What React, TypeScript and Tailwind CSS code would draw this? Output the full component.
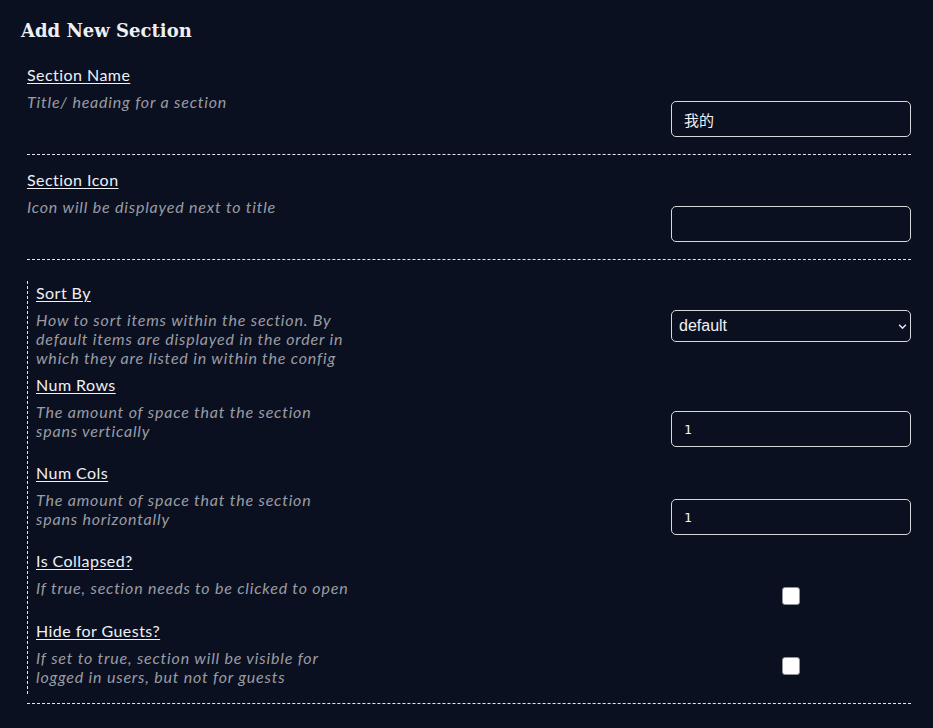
import { useState } from "react";

interface FieldProps {
  label: string;
  description: string;
  children: React.ReactNode;
}

// Label on top, description left, control in a fixed column on the right
function Field({ label, description, children }: FieldProps) {
  return (
    <div>
      <label className="block text-base leading-6 tracking-[0.45px] text-[#eef0f4] underline underline-offset-2">
        {label}
      </label>
      <div className="mt-[5px] flex items-start justify-between">
        <p className="w-[316px] text-base italic leading-[19px] tracking-[0.8px] text-[#9a9ca3]">
          {description}
        </p>
        <div className="flex w-[240px] justify-center">{children}</div>
      </div>
    </div>
  );
}

const inputClass =
  "mt-[9px] h-[36px] w-[240px] rounded-[5px] border border-[#d6d8dc] bg-[#0b1020] px-3 text-[#f1f2f4] outline-none";

function Checkbox({ checked, onChange }: { checked: boolean; onChange: () => void }) {
  return (
    <button
      type="button"
      onClick={onChange}
      className="mt-[9px] mb-[8px] flex h-[18px] w-[18px] items-center justify-center rounded-[3px] border border-[#8f9196] bg-white"
    >
      {checked && (
        <svg viewBox="0 0 12 12" className="h-3 w-3">
          <path d="M2 6.5l2.5 2.5L10 3.5" fill="none" stroke="#0b1020" strokeWidth="2" />
        </svg>
      )}
    </button>
  );
}

export default function App() {
  const [name, setName] = useState("我的");
  const [icon, setIcon] = useState("");
  const [sortBy, setSortBy] = useState("default");
  const [rows, setRows] = useState("1");
  const [cols, setCols] = useState("1");
  const [collapsed, setCollapsed] = useState(false);
  const [hideGuests, setHideGuests] = useState(false);

  return (
    <div
      className="min-h-screen bg-[#0b1020] px-[21px] pt-[20px] pb-10"
      style={{ fontFamily: "Lato, 'Noto Sans CJK SC', sans-serif" }}
    >
      <h2 className="text-[18px] font-bold leading-[22px] text-[#eef0f4] font-['DejaVu_Serif',serif]">
        Add New Section
      </h2>

      <div className="ml-[6px] mt-[21px] w-[884px]">
        {/* Top-level fields */}
        <div className="border-b border-dashed border-[#e3e5e8] pb-[17px]">
          <Field label="Section Name" description="Title/ heading for a section">
            <input
              value={name}
              onChange={(e) => setName(e.target.value)}
              className={`${inputClass} text-[15px] font-['Noto_Sans_CJK_SC',sans-serif]`}
            />
          </Field>
        </div>

        <div className="border-b border-dashed border-[#e3e5e8] pt-[13px] pb-[17px]">
          <Field label="Section Icon" description="Icon will be displayed next to title">
            <input value={icon} onChange={(e) => setIcon(e.target.value)} className={inputClass} />
          </Field>
        </div>

        {/* Display options group */}
        <div className="mt-[21px] flex flex-col gap-[6px] border-l border-dashed border-[#e3e5e8] pl-[8px] pb-[8px]">
          <Field
            label="Sort By"
            description="How to sort items within the section. By default items are displayed in the order in which they are listed in within the config"
          >
            <div className="relative w-[240px]">
              <select
                value={sortBy}
                onChange={(e) => setSortBy(e.target.value)}
                className="h-[32px] w-[240px] appearance-none rounded-[5px] border border-[#d6d8dc] bg-[#0b1020] pl-[7px] text-[16px] text-[#f1f2f4] outline-none font-['Liberation_Sans',sans-serif]"
              >
                <option value="default">default</option>
                <option value="alphabetical">alphabetical</option>
                <option value="reverse-alphabetical">reverse-alphabetical</option>
                <option value="most-used">most-used</option>
                <option value="last-used">last-used</option>
              </select>
              <svg
                viewBox="0 0 10 6"
                className="pointer-events-none absolute right-[4px] top-[14px] h-[5px] w-[9px]"
              >
                <path d="M1 1l4 4 4-4" fill="none" stroke="#e8e9ec" strokeWidth="1.8" />
              </svg>
            </div>
          </Field>

          <Field label="Num Rows" description="The amount of space that the section spans vertically">
            <input
              type="text"
              value={rows}
              onChange={(e) => setRows(e.target.value)}
              className={`${inputClass} mb-[8px] text-[13px] font-['DejaVu_Sans_Mono',monospace]`}
            />
          </Field>

          <Field label="Num Cols" description="The amount of space that the section spans horizontally">
            <input
              type="text"
              value={cols}
              onChange={(e) => setCols(e.target.value)}
              className={`${inputClass} mb-[8px] text-[13px] font-['DejaVu_Sans_Mono',monospace]`}
            />
          </Field>

          <Field label="Is Collapsed?" description="If true, section needs to be clicked to open">
            <Checkbox checked={collapsed} onChange={() => setCollapsed(!collapsed)} />
          </Field>

          <Field
            label="Hide for Guests?"
            description="If set to true, section will be visible for logged in users, but not for guests"
          >
            <Checkbox checked={hideGuests} onChange={() => setHideGuests(!hideGuests)} />
          </Field>
        </div>

        <div className="mt-[9px] border-b border-dashed border-[#e3e5e8]" />
      </div>
    </div>
  );
}
